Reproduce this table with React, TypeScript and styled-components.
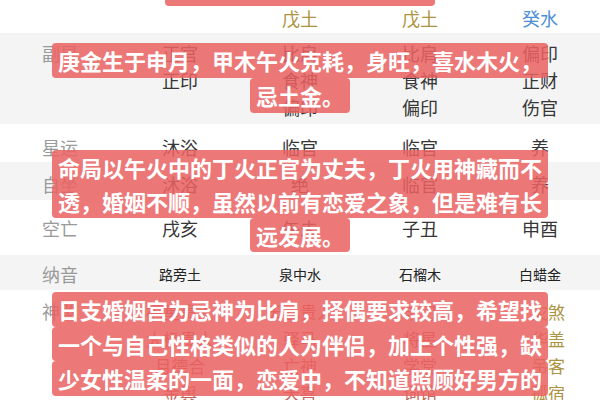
import React from "react";
import styled, { createGlobalStyle } from "styled-components";

const GlobalStyle = createGlobalStyle`
  html, body {
    margin: 0;
    padding: 0;
    background: #ffffff;
  }
  body {
    font-family: "Noto Sans CJK SC", "Noto Sans", sans-serif;
  }
`;

const Page = styled.div`
  position: relative;
  width: 600px;
  height: 400px;
  overflow: hidden;
  background: #ffffff;
`;

const Table = styled.div`
  display: flex;
  flex-direction: column;
`;

const Row = styled.div<{ $h: number; $pt: number; $shade?: boolean }>`
  display: grid;
  grid-template-columns: repeat(5, 120px);
  box-sizing: border-box;
  height: ${(p) => p.$h}px;
  padding-top: ${(p) => p.$pt}px;
  background: ${(p) => (p.$shade ? "#f4f4f4" : "#ffffff")};
`;

const Label = styled.div`
  text-align: center;
  color: #9a9a9a;
  font-size: 18px;
  line-height: 27px;
`;

const Cell = styled.div<{ $color?: string; $size?: number; $shift?: number }>`
  display: flex;
  flex-direction: column;
  align-items: center;
  color: ${(p) => p.$color ?? "#363636"};
  font-size: ${(p) => p.$size ?? 18}px;
  line-height: 27px;
  padding-left: ${(p) => p.$shift ?? 0}px;
  white-space: nowrap;
`;

const Caption = styled.div<{ $top: number }>`
  position: absolute;
  left: 0;
  right: 0;
  top: ${(p) => p.$top}px;
  display: flex;
  flex-direction: column;
  align-items: center;
`;

const Line = styled.div<{ $h: number; $w?: number }>`
  box-sizing: border-box;
  height: ${(p) => p.$h}px;
  line-height: ${(p) => p.$h}px;
  ${(p) => (p.$w ? `width: ${p.$w}px;` : "")}
  padding: 0 6px;
  background: rgba(234, 98, 98, 0.86);
  border-radius: 4px;
  color: #ffffff;
  font-weight: 700;
  font-size: 22px;
  letter-spacing: 0;
  white-space: nowrap;
`;

type Col = { lines: string[]; color?: string; size?: number; shift?: number };

const gold = "#ad9440";
const blue = "#4d8fd6";
const rust = "#c2645a";

const rows: {
  label: string;
  h: number;
  pt: number;
  shade?: boolean;
  cols: Col[];
}[] = [
  {
    label: "",
    h: 33,
    pt: 5,
    cols: [
      { lines: [] },
      { lines: ["戊土"], color: gold },
      { lines: ["戊土"], color: gold },
      { lines: ["癸水"], color: blue },
    ],
  },
  {
    label: "副星",
    h: 91,
    pt: 7,
    shade: true,
    cols: [
      { lines: ["正官", "正印"] },
      { lines: ["比肩", "食神", "偏印"] },
      { lines: ["比肩", "食神", "偏印"] },
      { lines: ["偏印", "正财", "伤官"] },
    ],
  },
  {
    label: "星运",
    h: 38,
    pt: 10,
    cols: [
      { lines: ["沐浴"] },
      { lines: ["临官"] },
      { lines: ["临官"] },
      { lines: ["养"] },
    ],
  },
  {
    label: "自坐",
    h: 38,
    pt: 9,
    shade: true,
    cols: [
      { lines: ["沐浴"] },
      { lines: ["绝"] },
      { lines: ["临官"] },
      { lines: ["养"] },
    ],
  },
  {
    label: "空亡",
    h: 55,
    pt: 15,
    cols: [
      { lines: ["戌亥"] },
      { lines: ["午未"] },
      { lines: ["子丑"] },
      { lines: ["申酉"] },
    ],
  },
  {
    label: "纳音",
    h: 35,
    pt: 6,
    shade: true,
    cols: [
      { lines: ["路旁土"], color: "#222222", size: 14 },
      { lines: ["泉中水"], color: "#222222", size: 14 },
      { lines: ["石榴木"], color: "#222222", size: 14 },
      { lines: ["白蜡金"], color: "#222222", size: 14 },
    ],
  },
  {
    label: "神煞",
    h: 120,
    pt: 8,
    cols: [
      { lines: ["福星贵人", "太极贵人", "月德合", "金舆"], color: rust, size: 17 },
      { lines: ["天乙贵人", "驿马", "亡神", "天喜"], color: rust, size: 17 },
      { lines: ["羊刃", "将星", "学堂", "词馆"], color: rust, size: 17 },
      { lines: ["灾煞", "华盖", "吊客", "孤宿"], color: gold, size: 17, shift: 16 },
    ],
  },
];

const captions: { top: number; h: number; lines: string[] }[] = [
  {
    top: 43,
    h: 35,
    lines: ["庚金生于申月，甲木午火克耗，身旺，喜水木火，", "忌土金。"],
  },
  {
    top: 150,
    h: 34,
    lines: [
      "命局以午火中的丁火正官为丈夫，丁火用神藏而不",
      "透，婚姻不顺，虽然以前有恋爱之象，但是难有长",
      "远发展。",
    ],
  },
  {
    top: 292,
    h: 34.5,
    lines: [
      "日支婚姻宫为忌神为比肩，择偶要求较高，希望找",
      "一个与自己性格类似的人为伴侣，加上个性强，缺",
      "少女性温柔的一面，恋爱中，不知道照顾好男方的",
    ],
  },
];

export default function App() {
  return (
    <>
      <GlobalStyle />
      <Page>
        <Table>
          {rows.map((r, i) => (
            <Row key={i} $h={r.h} $pt={r.pt} $shade={r.shade}>
              <Label>{r.label}</Label>
              {r.cols.map((c, j) => (
                <Cell key={j} $color={c.color} $size={c.size} $shift={c.shift}>
                  {c.lines.map((t, k) => (
                    <span key={k}>{t}</span>
                  ))}
                </Cell>
              ))}
            </Row>
          ))}
        </Table>
        <Caption $top={-29}>
          <Line $h={35} $w={270} />
        </Caption>
        {captions.map((c, i) => (
          <Caption key={i} $top={c.top}>
            {c.lines.map((t, k) => (
              <Line key={k} $h={c.h}>
                {t}
              </Line>
            ))}
          </Caption>
        ))}
      </Page>
    </>
  );
}
